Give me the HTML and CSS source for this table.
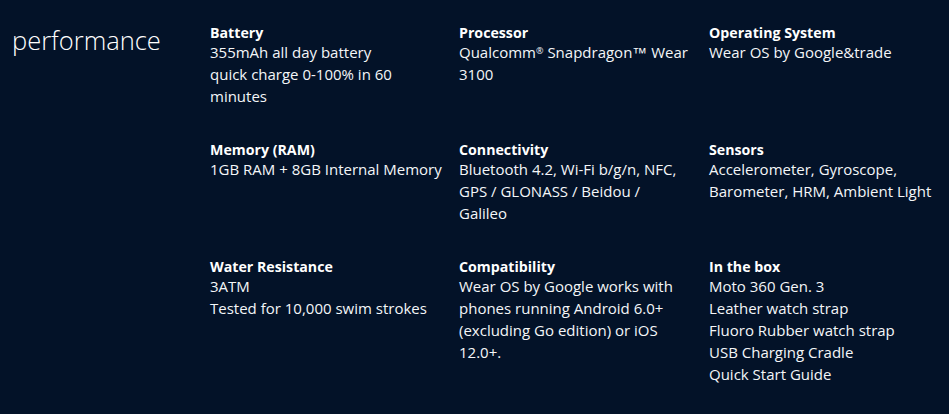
FILE: index.html
```html
<!DOCTYPE html>
<html>
<head>
<meta charset="utf-8">
<link rel="stylesheet" href="styles.css">
</head>
<body>
<section class="specs">
  <h2 class="title">performance</h2>
  <div class="grid">
    <div class="item"><div class="label">Battery</div><div class="val">355mAh all day battery<br>quick charge 0-100% in 60 minutes</div></div>
    <div class="item"><div class="label">Processor</div><div class="val">Qualcomm<span class="reg">®</span> Snapdragon<span class="tm">™</span> Wear 3100</div></div>
    <div class="item"><div class="label">Operating System</div><div class="val">Wear OS by Google&amp;trade</div></div>
    <div class="item"><div class="label">Memory (RAM)</div><div class="val">1GB RAM + 8GB Internal Memory</div></div>
    <div class="item"><div class="label">Connectivity</div><div class="val">Bluetooth 4.2, Wi-Fi b/g/n, NFC, GPS / GLONASS / Beidou /<br>Galileo</div></div>
    <div class="item"><div class="label">Sensors</div><div class="val">Accelerometer, Gyroscope, Barometer, HRM, Ambient Light</div></div>
    <div class="item"><div class="label">Water Resistance</div><div class="val">3ATM<br>Tested for 10,000 swim strokes</div></div>
    <div class="item"><div class="label">Compatibility</div><div class="val">Wear OS by Google works with phones running Android 6.0+ (excluding Go edition) or iOS 12.0+.</div></div>
    <div class="item"><div class="label">In the box</div><div class="val">Moto 360 Gen. 3<br>Leather watch strap<br>Fluoro Rubber watch strap<br>USB Charging Cradle<br>Quick Start Guide</div></div>
  </div>
</section>
</body>
</html>
```
FILE: styles.css
```css
html, body {
  margin: 0;
  padding: 0;
  background: #031228;
  height: 100%;
}
body {
  font-family: "Open Sans", "Liberation Sans", sans-serif;
  color: #f4f6f8;
}
.specs {
  display: flex;
  padding: 24px 0 0 12px;
}
.title {
  margin: 0;
  width: 198px;
  flex: none;
  font-weight: 300;
  font-size: 25.5px;
  line-height: 32px;
  color: #ffffff;
}
.grid {
  display: grid;
  grid-template-columns: 249px 250px 240px;
  row-gap: 34px;
}
.item {
  width: 236px;
}
.label {
  font-weight: 700;
  font-size: 14.2px;
  line-height: 17px;
  color: #ffffff;
}
.val {
  font-size: 15px;
  line-height: 22px;
}
.reg {
  font-size: 9px;
  line-height: 0;
  position: relative;
  top: -4px;
}
.tm {
  font-family: "Liberation Sans", sans-serif;
  line-height: 0;
}
```
